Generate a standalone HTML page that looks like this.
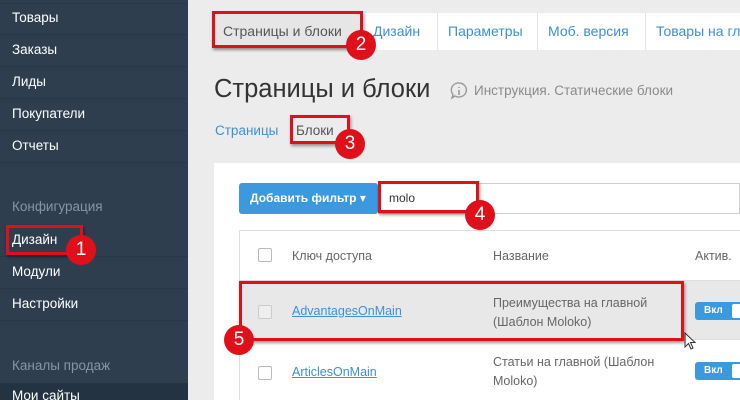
<!DOCTYPE html><html><head><meta charset="utf-8"><style>
*{margin:0;padding:0;box-sizing:border-box}
html,body{width:740px;height:400px;overflow:hidden}
body{position:relative;background:#ececec;font-family:"Liberation Sans","DejaVu Sans",sans-serif;font-size:13px}
.a{position:absolute;white-space:nowrap}
#sb{left:0;top:0;width:188px;height:400px;background:#2e3e4f}
.si{position:absolute;left:12px;color:#fff;font-size:13.5px}
.ln{position:absolute;left:0;width:188px;height:1px;background:#283848}
.rb{position:absolute;border:3px solid #e0101a;box-shadow:1px 2px 3px rgba(0,0,0,.4)}
.bd{position:absolute;width:30px;height:30px;border-radius:50%;background:#e0101a;color:#fff;font-size:19px;text-align:center;line-height:30px}
.tab{position:absolute;top:13px;height:37px;line-height:37px;color:#3f8fd8;font-size:14px;border-left:1px solid #e4e4e4;padding-left:10px;background:#fff;white-space:nowrap;overflow:hidden}
.cb{position:absolute;width:14px;height:14px;border:1px solid #bbb;border-radius:2px;background:#fff}
.tg{position:absolute;left:695px;width:50px;height:18px;background:#3b99e0;border-radius:3px;color:#fff;font-size:10px;font-weight:bold;padding:3px 0 0 9px}
.tg i{position:absolute;left:37px;top:2px;width:14px;height:14px;background:#fff;border-radius:2px}
</style></head><body>
<div id="sb" class="a">
<div class="ln" style="top:3px"></div><div class="ln" style="top:34px"></div><div class="ln" style="top:66px"></div><div class="ln" style="top:98px"></div><div class="ln" style="top:130px"></div><div class="ln" style="top:162px"></div>
<div class="si" style="top:10px">Товары</div><div class="si" style="top:42px">Заказы</div><div class="si" style="top:74px">Лиды</div><div class="si" style="top:106px">Покупатели</div><div class="si" style="top:138px">Отчеты</div>
<div class="si" style="top:199px;color:#8795a3">Конфигурация</div>
<div class="si" style="top:232px">Дизайн</div><div class="ln" style="top:256px"></div>
<div class="si" style="top:264px">Модули</div><div class="ln" style="top:288px"></div>
<div class="si" style="top:296px">Настройки</div><div class="ln" style="top:320px"></div>
<div class="si" style="top:358px;color:#8795a3">Каналы продаж</div>
<div class="a" style="left:0;top:383px;width:188px;height:17px;background:#243342"></div>
<div class="si" style="top:388px">Мои сайты</div>
</div>
<div class="a" style="left:213px;top:13px;width:527px;height:37px;background:#fff"></div>
<div class="tab" style="left:213px;width:149px;background:#e6e6e6;color:#555;border:none">Страницы и блоки</div>
<div class="tab" style="left:362px;width:75px">Дизайн</div>
<div class="tab" style="left:437px;width:100px">Параметры</div>
<div class="tab" style="left:537px;width:108px">Моб. версия</div>
<div class="tab" style="left:645px;width:95px">Товары на главной</div>
<div class="a" style="left:214px;top:75px;font-size:25.5px;color:#333">Страницы и блоки</div>
<svg class="a" style="left:449px;top:81px" width="20" height="20" viewBox="0 0 20 20"><path d="M10 2a7.5 7 0 1 1-4 13l-3 2 1-3.5A7 7 0 0 1 10 2z" fill="none" stroke="#999" stroke-width="1.4"/><path d="M10 6v1M10 9v5" stroke="#999" stroke-width="1.6"/></svg>
<div class="a" style="left:474px;top:83px;color:#8a8a8a;font-size:13.5px">Инструкция. Статические блоки</div>
<div class="a" style="left:215px;top:123px;color:#3f8fd8;font-size:13.5px">Страницы</div>
<div class="a" style="left:296px;top:123px;color:#555;font-size:13.5px">Блоки</div>
<div class="a" style="left:214px;top:163px;width:526px;height:237px;background:#fff"></div>
<div class="a" style="left:239px;top:183px;width:139px;height:31px;background:#3b99e0;border-radius:3px;color:#fff;font-weight:bold;font-size:12px;line-height:31px;padding-left:11px">Добавить фильтр ▾</div>
<div class="a" style="left:378px;top:183px;width:362px;height:31px;border:1px solid #ccc;border-left:none"></div>
<div class="a" style="left:389px;top:191px;font-size:12px;color:#333">molo</div>
<div class="a" style="left:239px;top:230px;width:501px;height:170px;border:1px solid #ddd;border-right:none;border-bottom:none"></div>
<div class="cb" style="left:258px;top:248px"></div>
<div class="a" style="left:292px;top:249px;color:#666;font-size:12.5px">Ключ доступа</div>
<div class="a" style="left:493px;top:249px;color:#666;font-size:12.5px">Название</div>
<div class="a" style="left:695px;top:249px;color:#666;font-size:12.5px">Актив.</div>
<div class="a" style="left:240px;top:280px;width:500px;height:60px;background:#e8e8e8;border-top:1px solid #ddd;border-bottom:1px solid #ddd"></div>
<div class="cb" style="left:258px;top:305px;background:#eee;border-color:#ccc"></div>
<div class="a" style="left:292px;top:304px;color:#3f8fd8;text-decoration:underline;font-size:12.5px">AdvantagesOnMain</div>
<div class="a" style="left:493px;top:294px;color:#666;font-size:12.5px;line-height:19px">Преимущества на главной<br>(Шаблон Moloko)</div>
<div class="tg" style="top:302px">Вкл<i></i></div>
<div class="cb" style="left:258px;top:366px"></div>
<div class="a" style="left:292px;top:365px;color:#3f8fd8;text-decoration:underline;font-size:12.5px">ArticlesOnMain</div>
<div class="a" style="left:493px;top:353px;color:#666;font-size:12.5px;line-height:19px">Статьи на главной (Шаблон<br>Moloko)</div>
<div class="tg" style="top:362px">Вкл<i></i></div>
<svg class="a" style="left:684px;top:332px" width="14" height="20"><path d="M1 1v14l3.5-3.5 2.5 5.5 2-1-2.5-5.5H11z" fill="#fff" stroke="#333"/></svg>
<div class="rb" style="left:6px;top:225px;width:77px;height:30px"></div>
<div class="rb" style="left:212px;top:11px;width:151px;height:37px"></div>
<div class="rb" style="left:290px;top:115px;width:60px;height:29px"></div>
<div class="rb" style="left:378px;top:181px;width:101px;height:32px"></div>
<div class="rb" style="left:239px;top:281px;width:445px;height:60px"></div>
<div class="bd" style="left:66px;top:235px">1</div>
<div class="bd" style="left:346px;top:30px">2</div>
<div class="bd" style="left:335px;top:129px">3</div>
<div class="bd" style="left:465px;top:200px">4</div>
<div class="bd" style="left:224px;top:325px">5</div>
</body></html>
